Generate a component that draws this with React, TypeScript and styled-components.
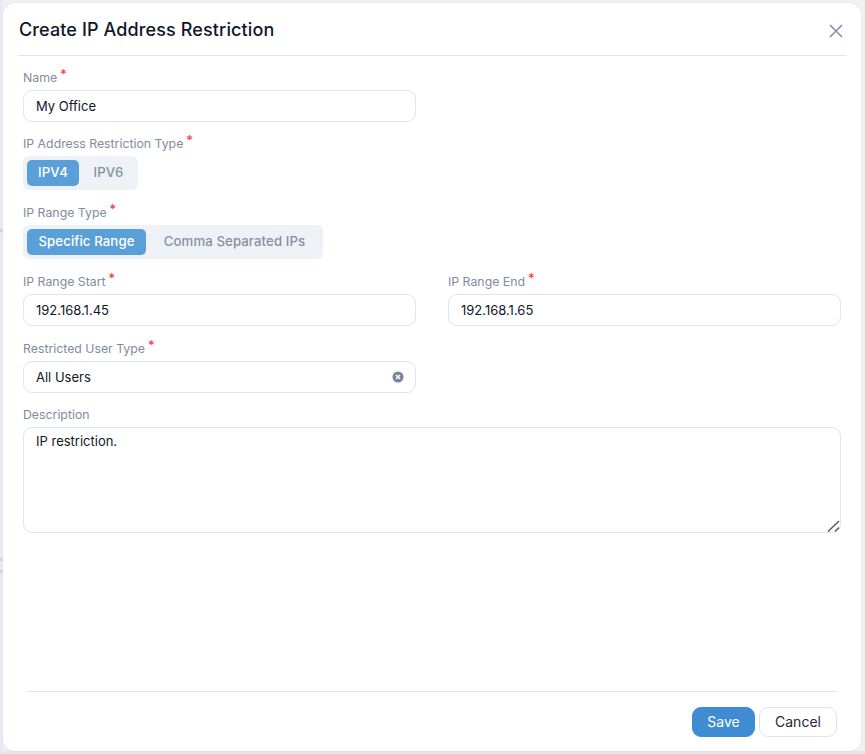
import styled, { createGlobalStyle } from 'styled-components';

const GlobalStyle = createGlobalStyle`
  html, body {
    margin: 0;
    padding: 0;
    background: #f1f1f2;
  }
  * {
    box-sizing: border-box;
  }
  body {
    font-family: 'Inter', 'Open Sans', sans-serif;
    overflow: hidden;
  }
`;

const Page = styled.div`
  position: relative;
  width: 865px;
  height: 754px;
  padding: 3px 4px 0 0;
  border-left: 3px solid #e8ecf1;
  border-bottom: 3px solid #e6e6e8;
`;

// bits of the page behind the dialog that peek out on the left
const BackdropMark = styled.div<{ $top: number }>`
  position: absolute;
  left: -3px;
  top: ${(p) => p.$top}px;
  width: 3px;
  height: 3px;
  background: #cfd6df;
`;

const Modal = styled.div`
  height: 748px;
  background: #fff;
  border-radius: 12px;
  box-shadow: 0 0 2px rgba(60, 60, 70, 0.12);
  display: flex;
  flex-direction: column;
  padding: 0 20px 0 15px;
`;

const Header = styled.div`
  height: 53px;
  border-bottom: 1px solid #e2e4ec;
  display: flex;
  align-items: center;
  justify-content: space-between;
  padding: 0 3px 0 1px;
  margin-right: -5px;
`;

const Title = styled.h2`
  margin: 0;
  font-size: 18px;
  font-weight: 500;
  letter-spacing: 0.12px;
  color: #0f172a;
`;

const CloseButton = styled.button`
  width: 14px;
  height: 14px;
  padding: 0;
  border: none;
  background: none;
  display: flex;
  margin: 4px 0 0;
`;

const Body = styled.div`
  flex: 1;
  padding: 11px 0 0 5px;
  display: flex;
  flex-direction: column;
`;

const Row = styled.div`
  display: grid;
  grid-template-columns: 393px 393px;
  column-gap: 32px;
`;

const Field = styled.div<{ $mb?: number }>`
  margin-bottom: ${(p) => p.$mb ?? 12}px;
`;

const Label = styled.label`
  display: block;
  height: 23px;
  line-height: 21px;
  font-size: 12.3px;
  color: #7f8c9e;
`;

const Star = styled.span`
  color: #ef2f2f;
  margin-left: 3px;
  font-size: 13px;
  position: relative;
  top: -3px;
`;

const Input = styled.input`
  display: block;
  width: 100%;
  height: 32px;
  border: 1px solid #dfe5ef;
  border-radius: 9px;
  padding: 0 12px 1px;
  font: 400 13px 'Inter', sans-serif;
  color: #0f172a;
  background: #fff;
  outline: none;
`;

const SelectBox = styled.div`
  height: 32px;
  border: 1px solid #dfe5ef;
  border-radius: 9px;
  padding: 0 11px 1px 12px;
  display: flex;
  align-items: center;
  justify-content: space-between;
  font-size: 13px;
  color: #0f172a;
`;

const TextAreaWrap = styled.div`
  position: relative;
  width: 818px;
`;

const TextArea = styled.textarea`
  display: block;
  width: 100%;
  height: 106px;
  border: 1px solid #dfe5ef;
  border-radius: 9px;
  padding: 5px 12px;
  font: 400 13px 'Inter', sans-serif;
  color: #0f172a;
  outline: none;
  resize: none;
`;

const ResizeGrip = styled.svg`
  position: absolute;
  right: 1px;
  bottom: 1px;
`;

const Segmented = styled.div`
  display: flex;
  width: fit-content;
  background: #eef1f6;
  border-radius: 6px;
  padding: 4px;
`;

const Segment = styled.div<{ $active?: boolean; $width: number }>`
  width: ${(p) => p.$width}px;
  height: 26px;
  line-height: 25px;
  padding-left: ${(p) => (p.$active ? 0 : 4)}px;
  text-align: center;
  border-radius: 5px;
  font-size: 13.2px;
  letter-spacing: 0.1px;
  font-weight: 500;
  background: ${(p) => (p.$active ? '#5b9fd9' : 'transparent')};
  color: ${(p) => (p.$active ? '#fff' : '#8591a3')};
`;

const Footer = styled.div`
  margin: 0 4px 14px 9px;
  border-top: 1px solid #e2e4ec;
  padding-top: 15px;
  display: flex;
  justify-content: flex-end;
  gap: 4px;
`;

const Button = styled.button<{ $primary?: boolean; $width: number }>`
  width: ${(p) => p.$width}px;
  height: 30px;
  padding: 0 0 1px;
  border-radius: 9px;
  font: 400 14px 'Inter', sans-serif;
  border: 1px solid ${(p) => (p.$primary ? '#3f8cd2' : '#dfe5ef')};
  background: ${(p) => (p.$primary ? '#3f8cd2' : '#fff')};
  color: ${(p) => (p.$primary ? '#fff' : '#1e293b')};
`;

function CloseIcon() {
  return (
    <svg width="14" height="14" viewBox="0 0 14 14" fill="none">
      <path d="M1 1L13 13M13 1L1 13" stroke="#7a8ea6" strokeWidth="1.5" />
    </svg>
  );
}

function ClearIcon() {
  return (
    <svg width="12" height="12" viewBox="0 0 12 12" fill="none">
      <circle cx="6" cy="6" r="5.5" fill="#74859b" />
      <path d="M4 4L8 8M8 4L4 8" stroke="#fff" strokeWidth="1.5" />
    </svg>
  );
}

function Required() {
  return <Star>*</Star>;
}

export default function App() {
  return (
    <Page>
      <GlobalStyle />
      <BackdropMark $top={229} />
      <BackdropMark $top={558} />
      <BackdropMark $top={570} />
      <Modal>
        <Header>
          <Title>Create IP Address Restriction</Title>
          <CloseButton>
            <CloseIcon />
          </CloseButton>
        </Header>
        <Body>
          <Field $mb={11}>
            <Row>
              <div>
                <Label>
                  Name
                  <Required />
                </Label>
                <Input defaultValue="My Office" />
              </div>
            </Row>
          </Field>
          <Field>
            <Label>
              IP Address Restriction Type
              <Required />
            </Label>
            <Segmented>
              <Segment $active $width={52}>
                IPV4
              </Segment>
              <Segment $width={55}>IPV6</Segment>
            </Segmented>
          </Field>
          <Field>
            <Label>
              IP Range Type
              <Required />
            </Label>
            <Segmented>
              <Segment $active $width={119}>
                Specific Range
              </Segment>
              <Segment $width={173}>Comma Separated IPs</Segment>
            </Segmented>
          </Field>
          <Field>
            <Row>
              <div>
                <Label>
                  IP Range Start
                  <Required />
                </Label>
                <Input defaultValue="192.168.1.45" />
              </div>
              <div>
                <Label>
                  IP Range End
                  <Required />
                </Label>
                <Input defaultValue="192.168.1.65" />
              </div>
            </Row>
          </Field>
          <Field $mb={11}>
            <Row>
              <div>
                <Label>
                  Restricted User Type
                  <Required />
                </Label>
                <SelectBox>
                  All Users
                  <ClearIcon />
                </SelectBox>
              </div>
            </Row>
          </Field>
          <Field>
            <Label>Description</Label>
            <TextAreaWrap>
              <TextArea defaultValue="IP restriction." />
              <ResizeGrip width="13" height="12" viewBox="0 0 13 12" fill="none">
                <path d="M1 11.5L12 1M8 11.5L12 7.5" stroke="#555" strokeWidth="1.4" />
              </ResizeGrip>
            </TextAreaWrap>
          </Field>
        </Body>
        <Footer>
          <Button $primary $width={63}>
            Save
          </Button>
          <Button $width={78}>Cancel</Button>
        </Footer>
      </Modal>
    </Page>
  );
}
